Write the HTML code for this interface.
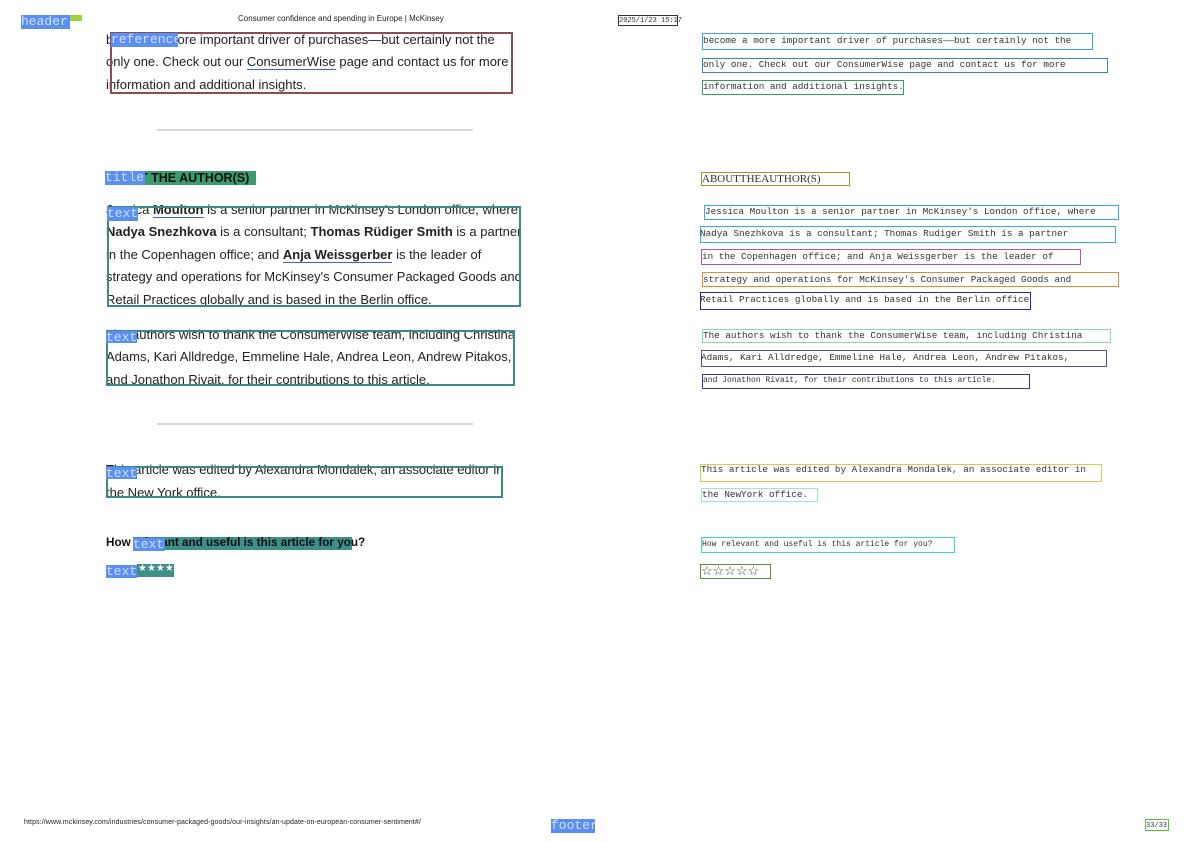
<!DOCTYPE html>
<html><head><meta charset="utf-8"><style>
body{margin:0;width:1190px;height:842px;background:#fff;position:relative;overflow:hidden;font-family:"Liberation Sans",Arial,sans-serif;}
.a{position:absolute;white-space:nowrap;}
.t{font-size:13px;color:#222;line-height:14px;}
.b{position:absolute;box-sizing:border-box;}
.lbl{position:absolute;background:#5b8ff2;color:#cfe0ff;font-family:"Liberation Mono",monospace;font-size:13px;line-height:13px;overflow:hidden;}
.r{font-family:"Liberation Mono",monospace;font-size:9.3px;color:#333;letter-spacing:0;line-height:12px;}
u{text-decoration:none;border-bottom:1.5px solid #3a63e0;}
</style></head><body>
<div class="lbl" style="left:21px;top:15px;width:49px;height:14px;">header</div>
<div class="b" style="left:70px;top:15px;width:12px;height:6px;background:#9fd33a;"></div>
<div class="a" style="left:238px;top:14px;font-size:8px;color:#222;">Consumer confidence and spending in Europe | McKinsey</div>
<div class="b" style="left:618px;top:15px;width:60px;height:11px;border:1px solid #333;"></div>
<div class="a r" style="left:619px;top:15px;font-size:7px;">2025/1/23 15:17</div>

<div class="a t" style="left:106px;top:33px;">become a more important driver of purchases—but certainly not the</div>
<div class="a t" style="left:106px;top:55px;">only one. Check out our <u>ConsumerWise</u> page and contact us for more</div>
<div class="a t" style="left:106px;top:78px;">information and additional insights.</div>
<div class="b" style="left:110px;top:32px;width:403px;height:62px;border:2.5px solid #8c4c57;"></div>
<div class="lbl" style="left:111px;top:33px;width:67px;height:14px;">reference</div>

<div class="b" style="left:157px;top:129px;width:316px;height:2px;background:#d6d6d6;"></div>

<div class="b" style="left:145px;top:171px;width:111px;height:14px;background:#3d9a6c;"></div>
<div class="a" style="left:140px;top:171px;font-size:12.5px;font-weight:bold;color:#111;line-height:14px;">T THE AUTHOR(S)</div>
<div class="lbl" style="left:105px;top:171px;width:40px;height:14px;">title</div>

<div class="a t" style="left:106px;top:203px;">Jessica <b><u>Moulton</u></b> is a senior partner in McKinsey's London office, where</div>
<div class="a t" style="left:106px;top:225px;"><b>Nadya Snezhkova</b> is a consultant; <b>Thomas Rüdiger Smith</b> is a partner</div>
<div class="a t" style="left:106px;top:248px;">in the Copenhagen office; and <b><u>Anja Weissgerber</u></b> is the leader of</div>
<div class="a t" style="left:106px;top:270px;">strategy and operations for McKinsey's Consumer Packaged Goods and</div>
<div class="a t" style="left:106px;top:293px;">Retail Practices globally and is based in the Berlin office.</div>
<div class="b" style="left:107px;top:206px;width:414px;height:101px;border:2.5px solid #3b8a85;"></div>
<div class="lbl" style="left:107px;top:207px;width:31px;height:14px;">text</div>

<div class="a t" style="left:106px;top:328px;">The authors wish to thank the ConsumerWise team, including Christina</div>
<div class="a t" style="left:106px;top:350px;">Adams, Kari Alldredge, Emmeline Hale, Andrea Leon, Andrew Pitakos,</div>
<div class="a t" style="left:106px;top:373px;">and Jonathon Rivait, for their contributions to this article.</div>
<div class="b" style="left:106px;top:330px;width:409px;height:56px;border:2.5px solid #3b8a85;"></div>
<div class="lbl" style="left:106px;top:331px;width:31px;height:12px;">text</div>

<div class="b" style="left:157px;top:423px;width:316px;height:2px;background:#d6d6d6;"></div>

<div class="a t" style="left:106px;top:463px;">This article was edited by Alexandra Mondalek, an associate editor in</div>
<div class="a t" style="left:106px;top:486px;">the New York office.</div>
<div class="b" style="left:106px;top:466px;width:397px;height:32px;border:2.5px solid #3b8a85;"></div>
<div class="lbl" style="left:106px;top:467px;width:31px;height:12px;">text</div>

<div class="b" style="left:133px;top:537px;width:219px;height:13px;background:#3d8f87;"></div>
<div class="a" style="left:106px;top:536px;font-size:11.7px;font-weight:bold;color:#111;">How relevant and useful is this article for you?</div>
<div class="lbl" style="left:133px;top:538px;width:32px;height:13px;">text</div>

<div class="b" style="left:137px;top:564px;width:37px;height:13px;background:#3d8f87;"></div>
<div class="a" style="left:138px;top:563px;font-size:10px;color:#fff;">★★★★★</div>
<div class="lbl" style="left:106px;top:565px;width:31px;height:13px;">text</div>

<div class="b" style="left:702px;top:33px;width:391px;height:17px;border:1px solid #3aa0d8;"></div>
<div class="a r" style="left:703px;top:35px;">become a more important driver of purchases——but certainly not the</div>
<div class="b" style="left:702px;top:58px;width:406px;height:15px;border:1px solid #3b8a9a;"></div>
<div class="a r" style="left:703px;top:59px;">only one. Check out our ConsumerWise page and contact us for more</div>
<div class="b" style="left:702px;top:80px;width:202px;height:15px;border:1px solid #3c9a60;"></div>
<div class="a r" style="left:703px;top:81px;">information and additional insights.</div>

<div class="b" style="left:701px;top:172px;width:149px;height:14px;border:1px solid #9a9a30;"></div>
<div class="a r" style="left:702px;top:173px;font-size:11px;font-family:'Liberation Serif',serif;">ABOUTTHEAUTHOR(S)</div>

<div class="b" style="left:704px;top:205px;width:415px;height:15px;border:1px solid #3aa8d8;"></div>
<div class="a r" style="left:705px;top:206px;">Jessica Moulton is a senior partner in McKinsey's London office, where</div>
<div class="b" style="left:700px;top:226px;width:416px;height:17px;border:1px solid #3ab0d0;"></div>
<div class="a r" style="left:700px;top:228px;">Nadya Snezhkova is a consultant; Thomas Rudiger Smith is a partner</div>
<div class="b" style="left:701px;top:249px;width:380px;height:16px;border:1px solid #9a5ad0;"></div>
<div class="a r" style="left:702px;top:251px;">in the Copenhagen office; and Anja Weissgerber is the leader of</div>
<div class="b" style="left:702px;top:272px;width:417px;height:15px;border:1px solid #e08a3a;"></div>
<div class="a r" style="left:703px;top:274px;">strategy and operations for McKinsey's Consumer Packaged Goods and</div>
<div class="b" style="left:700px;top:292px;width:331px;height:18px;border:1px solid #2a2aa0;"></div>
<div class="a r" style="left:700px;top:294px;">Retail Practices globally and is based in the Berlin office</div>

<div class="b" style="left:702px;top:329px;width:409px;height:14px;border:1px solid #8ad8b0;"></div>
<div class="a r" style="left:703px;top:330px;">The authors wish to thank the ConsumerWise team, including Christina</div>
<div class="b" style="left:701px;top:350px;width:406px;height:17px;border:1px solid #50507a;"></div>
<div class="a r" style="left:701px;top:352px;">Adams, Kari Alldredge, Emmeline Hale, Andrea Leon, Andrew Pitakos,</div>
<div class="b" style="left:702px;top:374px;width:328px;height:15px;border:1px solid #3a3a70;"></div>
<div class="a r" style="left:703px;top:375px;font-size:8px;">and Jonathon Rivait, for their contributions to this article.</div>

<div class="b" style="left:700px;top:464px;width:402px;height:18px;border:1px solid #d8cc50;"></div>
<div class="a r" style="left:701px;top:464px;">This article was edited by Alexandra Mondalek, an associate editor in</div>
<div class="b" style="left:701px;top:488px;width:117px;height:14px;border:1px solid #a0e0e0;"></div>
<div class="a r" style="left:702px;top:489px;">the NewYork office.</div>

<div class="b" style="left:701px;top:537px;width:254px;height:16px;border:1px solid #40d8c0;"></div>
<div class="a r" style="left:702px;top:539px;font-size:8px;">How relevant and useful is this article for you?</div>
<div class="b" style="left:700px;top:564px;width:71px;height:15px;border:1px solid #5a8a3a;"></div>
<div class="a" style="left:701px;top:563px;font-size:13px;color:#444;">☆☆☆☆☆</div>

<div class="a" style="left:24px;top:819px;font-size:7px;color:#222;letter-spacing:0.1px;">https://www.mckinsey.com/industries/consumer-packaged-goods/our-insights/an-update-on-european-consumer-sentiment#/</div>
<div class="lbl" style="left:551px;top:819px;width:44px;height:14px;">footer</div>
<div class="b" style="left:1145px;top:819px;width:24px;height:12px;border:1px solid #5ac040;"></div>
<div class="a r" style="left:1146px;top:820px;font-size:7px;">33/33</div>
</body></html>
